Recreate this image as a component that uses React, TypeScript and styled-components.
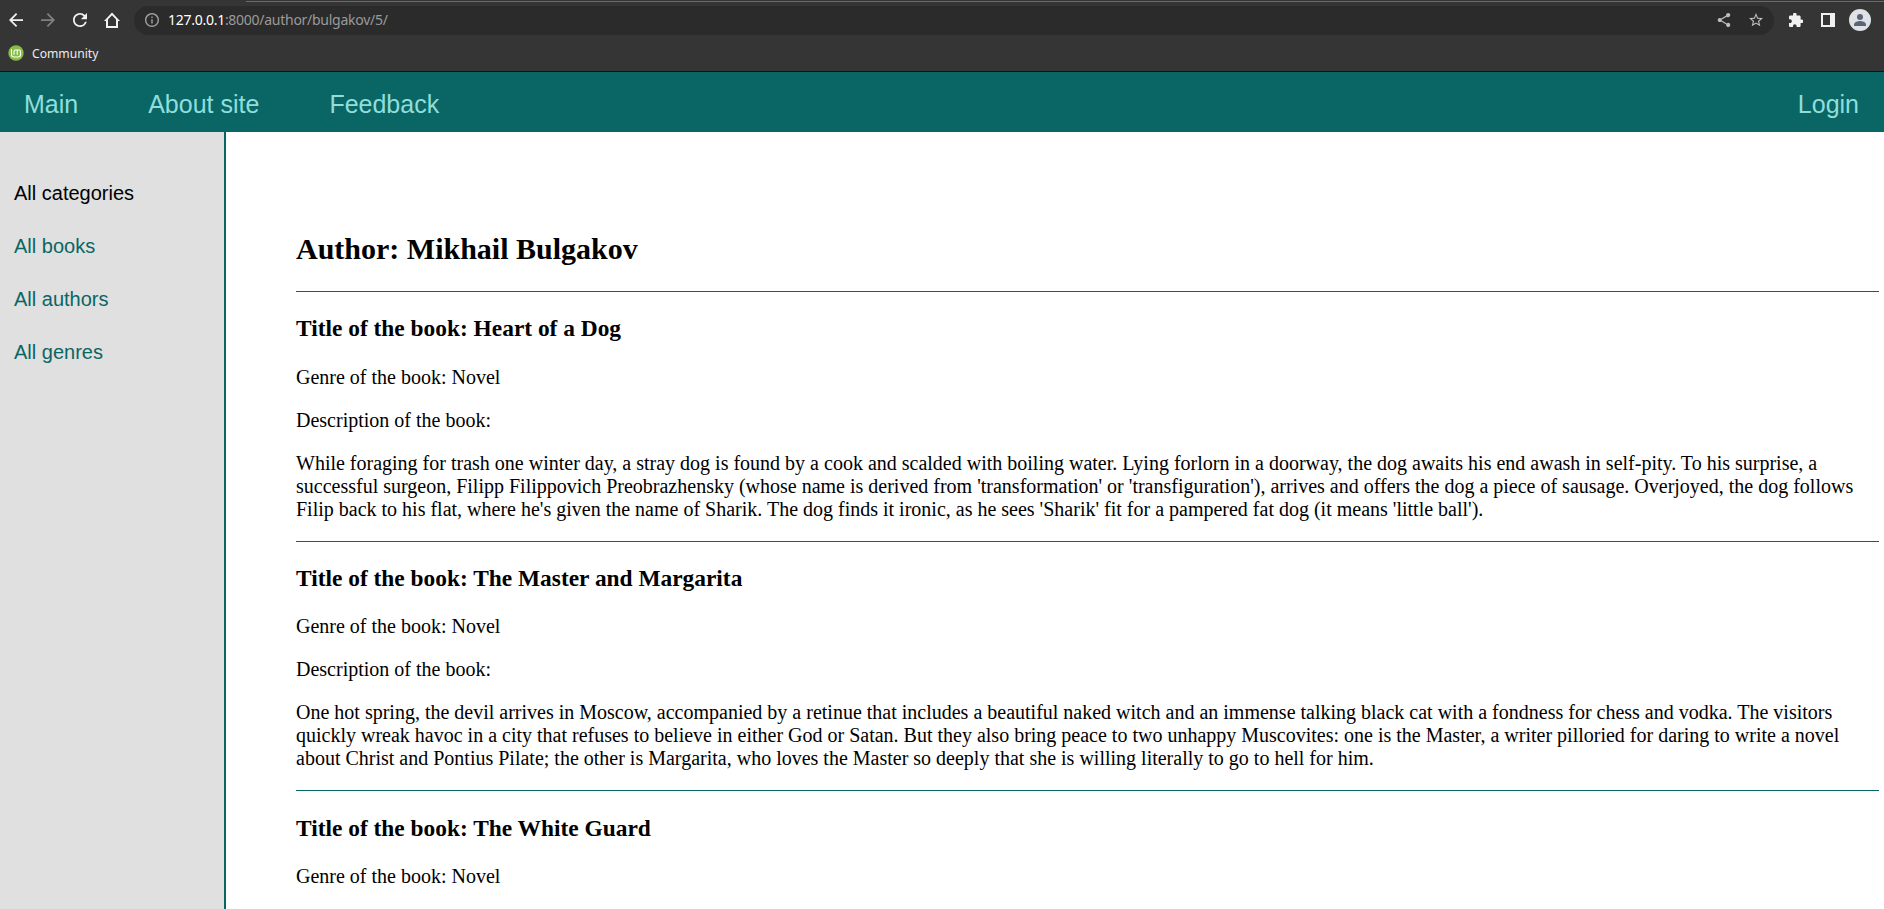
import React from 'react';
import styled, { createGlobalStyle } from 'styled-components';
import { MdArrowBack, MdArrowForward, MdRefresh, MdInfoOutline, MdShare, MdStarBorder, MdExtension } from 'react-icons/md';

const GlobalStyle = createGlobalStyle`
  html, body { margin: 0; padding: 0; }
  body { background: #fff; font: 20px "Liberation Serif", serif; color: #000; overflow: hidden; }
`;

const Page = styled.div`
  height: 909px;
  display: flex;
  flex-direction: column;
  overflow: hidden;
`;

const Chrome = styled.div`
  box-sizing: border-box;
  height: 72px;
  flex: none;
  background: #353535;
  border-bottom: 1px solid #141414;
  font-family: "Noto Sans", sans-serif;
`;

const TabEdge = styled.div`
  height: 1px;
  margin: 1px 0 0 246px;
  background: #6a6a6a;
`;

const Toolbar = styled.div`
  display: flex;
  align-items: flex-start;
  height: 29px;
  margin-top: 4px;
`;

const NavButtons = styled.div`
  display: flex;
  width: 134px;
`;

const IconSlot = styled.span<{ $w: number; $color?: string }>`
  display: flex;
  align-items: center;
  justify-content: center;
  flex: none;
  width: ${(p) => p.$w}px;
  height: 28px;
  color: ${(p) => p.$color || '#f1f1f1'};
`;

const Omnibox = styled.div`
  box-sizing: border-box;
  width: 1640px;
  height: 29px;
  border-radius: 15px;
  background: #2b2b2b;
  display: flex;
  align-items: flex-start;
  padding: 0 2px 0 9px;
`;

const Url = styled.span`
  margin-left: 7px;
  flex: 1;
  font-size: 14px;
  letter-spacing: -0.27px;
  line-height: 28px;
  color: #9a9a9a;
  white-space: nowrap;
`;

const Host = styled.span`
  color: #fff;
`;

const Bookmarks = styled.div`
  display: flex;
  align-items: center;
  height: 36px;
  padding-left: 8px;
  gap: 8px;
  font-size: 12.15px;
  color: #ececec;
`;

const Header = styled.nav`
  box-sizing: border-box;
  display: flex;
  align-items: center;
  height: 60px;
  flex: none;
  padding: 4px 25px 0 24px;
  background: #0a6664;
  font: 25px "Liberation Sans", Arial, sans-serif;
`;

const HeaderLink = styled.a<{ $push?: boolean }>`
  color: #8fdedc;
  margin-right: ${(p) => (p.$push ? 'auto' : '70px')};
  &:last-child { margin-right: 0; }
`;

const Body = styled.div`
  display: flex;
  flex: 1;
  min-height: 0;
`;

const Sidebar = styled.aside`
  box-sizing: border-box;
  width: 226px;
  flex: none;
  background: #e0e0e0;
  border-right: 2px solid #0a6664;
  padding: 50px 0 0 14px;
  font: 20px/23px "Liberation Sans", Arial, sans-serif;
`;

const SideItem = styled.div<{ $active?: boolean }>`
  margin-bottom: 30px;
  color: ${(p) => (p.$active ? '#000' : '#0a6664')};
`;

const Content = styled.main`
  flex: 1;
  padding: 75px 5px 0 70px;
`;

const AuthorTitle = styled.h2`
  font-size: 30px;
  margin: 24.9px 0;
`;

const Rule = styled.hr`
  border: 0;
  height: 1px;
  margin: 10px 0;
  background: #0a6664;
`;

const BookTitle = styled.h3`
  font-size: 23.4px;
  margin: 23.4px 0;
`;

const Text = styled.p`
  margin: 20px 0;
`;

const books = [
  {
    title: 'Heart of a Dog',
    description:
      "While foraging for trash one winter day, a stray dog is found by a cook and scalded with boiling water. Lying forlorn in a doorway, the dog awaits his end awash in self-pity. To his surprise, a successful surgeon, Filipp Filippovich Preobrazhensky (whose name is derived from 'transformation' or 'transfiguration'), arrives and offers the dog a piece of sausage. Overjoyed, the dog follows Filip back to his flat, where he's given the name of Sharik. The dog finds it ironic, as he sees 'Sharik' fit for a pampered fat dog (it means 'little ball').",
  },
  {
    title: 'The Master and Margarita',
    description:
      'One hot spring, the devil arrives in Moscow, accompanied by a retinue that includes a beautiful naked witch and an immense talking black cat with a fondness for chess and vodka. The visitors quickly wreak havoc in a city that refuses to believe in either God or Satan. But they also bring peace to two unhappy Muscovites: one is the Master, a writer pilloried for daring to write a novel about Christ and Pontius Pilate; the other is Margarita, who loves the Master so deeply that she is willing literally to go to hell for him.',
  },
  { title: 'The White Guard' },
];

const HomeIcon = () => (
  <svg width="16" height="16" viewBox="0 0 16 16" fill="currentColor" fillRule="evenodd">
    <path d="M8 .4 0 9h2v7h12V9h2zM8 3.200 4 7.400V14h8V7.400z" />
  </svg>
);

const SidePanelIcon = () => (
  <svg width="14" height="14" viewBox="0 0 14 14" fill="currentColor" fillRule="evenodd">
    <path d="M0 0h14v14H0zM2 2v10h7V2z" />
  </svg>
);

const AvatarIcon = () => (
  <svg width="22" height="22" viewBox="0 0 22 22">
    <circle cx="11" cy="11" r="11" fill="#dee1e6" />
    <circle cx="11" cy="8" r="3" fill="#5a6378" />
    <path d="M5 17v-1.400c0-2.400 4-3.500 6-3.500s6 1.100 6 3.500V17z" fill="#5a6378" />
  </svg>
);

const MintIcon = () => (
  <svg width="16" height="16" viewBox="0 0 16 16" fill="none" stroke="#fff" strokeWidth="1.100">
    <circle cx="8" cy="8" r="7.700" fill="#86be43" stroke="none" />
    <path d="M3.500 4v5.500c0 1.600.9 2.500 2.500 2.500h4c1.600 0 2.500-.9 2.500-2.500V6.500c0-.9-.5-1.500-1.500-1.500H7.500c-1 0-1.500.6-1.500 1.500V9.700M9.250 5v4.700" />
  </svg>
);

export default function App() {
  return (
    <Page>
      <GlobalStyle />
      <Chrome>
        <TabEdge />
        <Toolbar>
          <NavButtons>
            <IconSlot $w={32}><MdArrowBack size={14} viewBox="4 4 16 16" /></IconSlot>
            <IconSlot $w={32} $color="#808080"><MdArrowForward size={14} viewBox="4 4 16 16" /></IconSlot>
            <IconSlot $w={32}><MdRefresh size={14} viewBox="4 4 16 16" /></IconSlot>
            <IconSlot $w={32}><HomeIcon /></IconSlot>
          </NavButtons>
          <Omnibox>
            <IconSlot $w={18} $color="#a0a0a0"><MdInfoOutline size={14} viewBox="2 2 20 20" /></IconSlot>
            <Url><Host>127.0.0.1</Host>:8000/author/bulgakov/5/</Url>
            <IconSlot $w={32} $color="#bdbdbd"><MdShare size={14} viewBox="2 2 20 20" /></IconSlot>
            <IconSlot $w={32} $color="#bdbdbd"><MdStarBorder size={14} viewBox="2 2 20 20" /></IconSlot>
          </Omnibox>
          <IconSlot $w={44}><MdExtension size={14} viewBox="2 1.5 20.5 20.5" /></IconSlot>
          <IconSlot $w={20}><SidePanelIcon /></IconSlot>
          <IconSlot $w={44}><AvatarIcon /></IconSlot>
        </Toolbar>
        <Bookmarks>
          <MintIcon />
          <span>Community</span>
        </Bookmarks>
      </Chrome>
      <Header>
        <HeaderLink>Main</HeaderLink>
        <HeaderLink>About site</HeaderLink>
        <HeaderLink $push>Feedback</HeaderLink>
        <HeaderLink>Login</HeaderLink>
      </Header>
      <Body>
        <Sidebar>
          <SideItem $active>All categories</SideItem>
          <SideItem>All books</SideItem>
          <SideItem>All authors</SideItem>
          <SideItem>All genres</SideItem>
        </Sidebar>
        <Content>
          <AuthorTitle>Author: Mikhail Bulgakov</AuthorTitle>
          {books.map((book) => (
            <React.Fragment key={book.title}>
              <Rule />
              <BookTitle>Title of the book: {book.title}</BookTitle>
              <Text>Genre of the book: Novel</Text>
              {book.description && (
                <>
                  <Text>Description of the book:</Text>
                  <Text>{book.description}</Text>
                </>
              )}
            </React.Fragment>
          ))}
        </Content>
      </Body>
    </Page>
  );
}
